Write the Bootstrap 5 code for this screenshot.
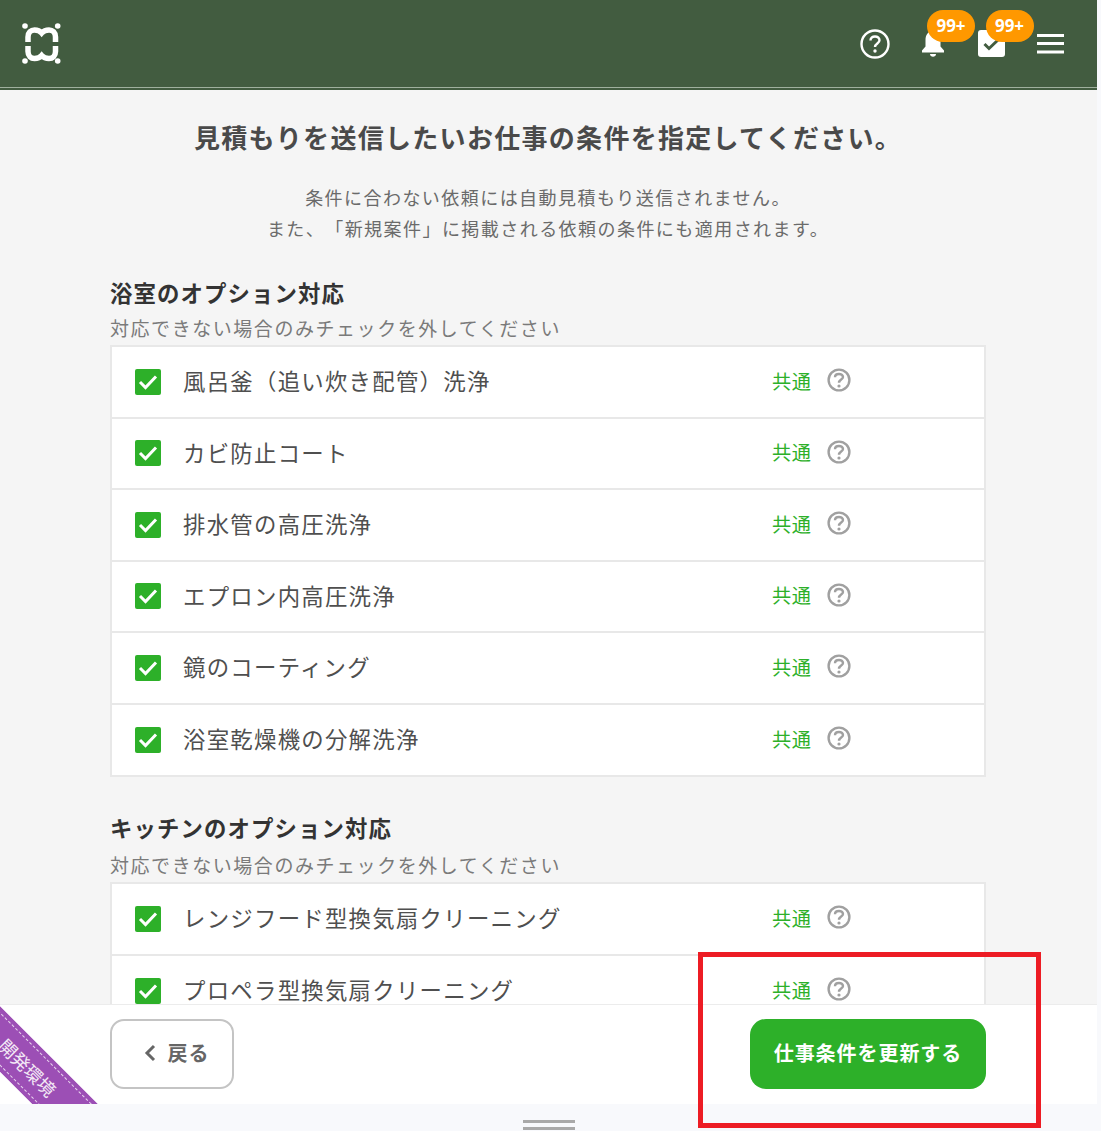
<!DOCTYPE html>
<html lang="ja"><head><meta charset="utf-8">
<link href="https://cdn.jsdelivr.net/npm/bootstrap@5.3.0/dist/css/bootstrap.min.css" rel="stylesheet">
<style>
html,body{height:1131px;overflow:hidden}
body{background:#f8f9fc;font-family:"Noto Sans CJK JP","Noto Sans",sans-serif;color:#4a4a4a;text-spacing-trim:space-all}
.shell{height:1131px;width:1097px;position:relative;background:#f5f5f5}
.topbar{height:90px;flex:none;background:#425c40;border-bottom:2px solid #425c40;position:relative}
.topbar::after{content:"";position:absolute;left:0;right:0;bottom:0;height:1px;background:#9fb09e}
.logo-wrap{padding:22px 0 0 21px}
.tools{padding:0 33px 0 0;height:88px}
.tool{position:relative;display:block;width:58.5px;height:30px;text-align:center}
.pill{position:absolute;top:-19px;left:23px;width:48px;height:32px;border-radius:16px;background:#ff9800;color:#fff;font:700 17px/31px "Open Sans",sans-serif}
.tool-menu{margin-left:16px}
.scroll-area{overflow:hidden;min-height:0}
.inner{width:876px;margin-left:110px}
.ttl{font-size:26px;line-height:36px;font-weight:700;letter-spacing:1.3px;margin:29px 0 0;color:#4a4a4a;text-align:center}
.lede{font-size:18px;line-height:31px;letter-spacing:1.45px;color:#6a6a6a;margin:27px 0 0;text-align:center}
.sec{font-size:22.4px;font-weight:700;line-height:30px;letter-spacing:1.12px;color:#333;margin:0}
.sec-a{margin-top:33px}.sec-b{margin-top:35px}
.hint{font-size:19px;line-height:26px;letter-spacing:1.55px;color:#7a7a7a;margin:8px 0 4px}
.sec-b + .hint{margin-top:10px}
.opt-list{background:#fff;border:2px solid #e8e8e8;border-radius:0}
.opt-row{height:71.5px;border-bottom:2px solid #e8e8e8;padding:0 0 0 23px}
.opt-row:last-child{border-bottom:0;height:70.5px}
.chk{width:26px;height:26px;flex:none;border-radius:2px;background:#2db029;display:flex;align-items:center;justify-content:center}
.opt-name{font-size:22.4px;letter-spacing:1.27px;color:#4f4f4f;margin-left:22px;width:589px;line-height:30px;padding-bottom:3px;box-sizing:content-box}
.shared{font-size:19.2px;letter-spacing:.5px;color:#2db029;width:55px;line-height:26px;padding-bottom:2px;box-sizing:content-box}
.qmark{margin-top:-3px}
.footbar{height:100px;flex:none;background:#fff;border-top:1px solid #ececec;padding:14px 111px 16px 110px;position:relative;overflow:hidden}
.back{width:124px;height:70px;border:2px solid #c4c4c4;border-radius:14px;background:#fff;color:#666;font-size:20px;font-weight:700;letter-spacing:1px;gap:12px;padding:0 0 2px 8px}
.back:hover{background:#fff;color:#666;border-color:#c4c4c4}
.go{width:236px;height:70px;border:0;border-radius:16px;background:#2db029;color:#fff;font-size:20px;font-weight:700;letter-spacing:.95px;padding:0 0 2px}
.go:hover{background:#2db029;color:#fff}
.strip{height:27px;flex:none;background:#f8f9fc;position:relative}
.grip{width:52px;height:10px;margin:16px auto 0;border-top:3px solid #a9a9a9;border-bottom:3px solid #a9a9a9;position:relative;left:0}
.ribbon{position:absolute;left:-72px;top:38.500px;width:200px;height:46px;background:#9c4fb5;transform:rotate(45deg);color:#f3e9f6;font-size:18px;line-height:36px;text-align:center;border:5px solid #9c4fb5;outline:1px dashed #e9d6ef;outline-offset:-5px}
.redbox{position:absolute;left:698px;top:952px;width:343px;height:176px;border:5px solid #ed1c24;pointer-events:none}
</style></head>
<body>
<div class="shell d-flex flex-column">
<header class="topbar d-flex justify-content-between">
<div class="logo-wrap"><svg width="42" height="42" viewBox="0 0 42 42" fill="none"><g fill="#fff"><circle cx="4" cy="4" r="2.8"/><circle cx="36.700" cy="4" r="2.8"/><circle cx="4" cy="39" r="2.8"/><circle cx="36.700" cy="39" r="2.8"/></g><path d="M7 20V15C7 10.500 10 8 13.500 8C16.500 8 19 9 20.700 11C22.500 9 25 8 28 8C31.500 8 34.500 10.500 34.500 15V20M7 24V29.500C7 34 10 36.500 13.500 36.500C16.500 36.500 19 35.500 20.700 33.500C22.500 35.500 25 36.500 28 36.500C31.500 36.500 34.500 34 34.500 29.500V24" stroke="#fff" stroke-width="5.500"/></svg></div>
<nav class="tools d-flex align-items-center">
<span class="tool"><svg width="30" height="30" viewBox="0 0 30 30" fill="none" stroke="#fff"><circle cx="15" cy="15" r="13.500" stroke-width="2.400"/><path d="M10.500 11.500C10.500 8.800 12.500 7.500 15 7.500C17.500 7.500 19.500 9 19.500 11.300C19.500 14.500 15 14.500 15 18" stroke-width="2.400"/><circle cx="15" cy="22" r="1.700" fill="#fff" stroke="none"/></svg></span>
<span class="tool"><svg width="24" height="30" viewBox="0 0 24 30"><path d="M12 2C7 2 4.500 6 4.500 11V17.500L1 21.500V23.500H23V21.500L19.500 17.500V11C19.500 6 17 2 12 2Z" fill="#fff"/><path d="M9 25H15C15 28.500 9 28.500 9 25Z" fill="#fff"/></svg><span class="pill">99+</span></span>
<span class="tool"><svg width="27" height="27" viewBox="0 0 27 27"><rect width="27" height="27" rx="3" fill="#fff"/><path d="M6.500 14L11 18.500L20.500 9.500" fill="none" stroke="#425c40" stroke-width="3"/></svg><span class="pill">99+</span></span>
<svg width="27" height="20" viewBox="0 0 27 20" fill="#fff" class="tool-menu"><rect width="27" height="3"/><rect y="8" width="27" height="3"/><rect y="16.500" width="27" height="3"/></svg>
</nav>
</header>
<main class="scroll-area flex-grow-1">
<div class="inner">
<h1 class="ttl">見積もりを送信したいお仕事の条件を指定してください。</h1>
<p class="lede">条件に合わない依頼には自動見積もり送信されません。<br>また、「新規案件」に掲載される依頼の条件にも適用されます。</p>
<h2 class="sec sec-a">浴室のオプション対応</h2>
<p class="hint">対応できない場合のみチェックを外してください</p>
<ul class="opt-list list-unstyled mb-0">
<li class="opt-row d-flex align-items-center"><span class="chk"><svg width="20" height="16" viewBox="0 0 20 16" fill="none" stroke="#fff" stroke-width="3"><path d="M2 8L7.500 13.500L18 2.500"/></svg></span><span class="opt-name">風呂釜（追い炊き配管）洗浄</span><span class="shared">共通</span><svg class="qmark" width="24" height="24" viewBox="0 0 30 30" fill="none" stroke="#a0a0a0"><circle cx="15" cy="15" r="13" stroke-width="3"/><path d="M10 11.500C10 8.800 12.300 7.500 15 7.500C17.700 7.500 20 9 20 11.300C20 14.500 15 14.500 15 18.500" stroke-width="3"/><circle cx="15" cy="22.500" r="2" fill="#a0a0a0" stroke="none"/></svg></li>
<li class="opt-row d-flex align-items-center"><span class="chk"><svg width="20" height="16" viewBox="0 0 20 16" fill="none" stroke="#fff" stroke-width="3"><path d="M2 8L7.500 13.500L18 2.500"/></svg></span><span class="opt-name">カビ防止コート</span><span class="shared">共通</span><svg class="qmark" width="24" height="24" viewBox="0 0 30 30" fill="none" stroke="#a0a0a0"><circle cx="15" cy="15" r="13" stroke-width="3"/><path d="M10 11.500C10 8.800 12.300 7.500 15 7.500C17.700 7.500 20 9 20 11.300C20 14.500 15 14.500 15 18.500" stroke-width="3"/><circle cx="15" cy="22.500" r="2" fill="#a0a0a0" stroke="none"/></svg></li>
<li class="opt-row d-flex align-items-center"><span class="chk"><svg width="20" height="16" viewBox="0 0 20 16" fill="none" stroke="#fff" stroke-width="3"><path d="M2 8L7.500 13.500L18 2.500"/></svg></span><span class="opt-name">排水管の高圧洗浄</span><span class="shared">共通</span><svg class="qmark" width="24" height="24" viewBox="0 0 30 30" fill="none" stroke="#a0a0a0"><circle cx="15" cy="15" r="13" stroke-width="3"/><path d="M10 11.500C10 8.800 12.300 7.500 15 7.500C17.700 7.500 20 9 20 11.300C20 14.500 15 14.500 15 18.500" stroke-width="3"/><circle cx="15" cy="22.500" r="2" fill="#a0a0a0" stroke="none"/></svg></li>
<li class="opt-row d-flex align-items-center"><span class="chk"><svg width="20" height="16" viewBox="0 0 20 16" fill="none" stroke="#fff" stroke-width="3"><path d="M2 8L7.500 13.500L18 2.500"/></svg></span><span class="opt-name">エプロン内高圧洗浄</span><span class="shared">共通</span><svg class="qmark" width="24" height="24" viewBox="0 0 30 30" fill="none" stroke="#a0a0a0"><circle cx="15" cy="15" r="13" stroke-width="3"/><path d="M10 11.500C10 8.800 12.300 7.500 15 7.500C17.700 7.500 20 9 20 11.300C20 14.500 15 14.500 15 18.500" stroke-width="3"/><circle cx="15" cy="22.500" r="2" fill="#a0a0a0" stroke="none"/></svg></li>
<li class="opt-row d-flex align-items-center"><span class="chk"><svg width="20" height="16" viewBox="0 0 20 16" fill="none" stroke="#fff" stroke-width="3"><path d="M2 8L7.500 13.500L18 2.500"/></svg></span><span class="opt-name">鏡のコーティング</span><span class="shared">共通</span><svg class="qmark" width="24" height="24" viewBox="0 0 30 30" fill="none" stroke="#a0a0a0"><circle cx="15" cy="15" r="13" stroke-width="3"/><path d="M10 11.500C10 8.800 12.300 7.500 15 7.500C17.700 7.500 20 9 20 11.300C20 14.500 15 14.500 15 18.500" stroke-width="3"/><circle cx="15" cy="22.500" r="2" fill="#a0a0a0" stroke="none"/></svg></li>
<li class="opt-row d-flex align-items-center"><span class="chk"><svg width="20" height="16" viewBox="0 0 20 16" fill="none" stroke="#fff" stroke-width="3"><path d="M2 8L7.500 13.500L18 2.500"/></svg></span><span class="opt-name">浴室乾燥機の分解洗浄</span><span class="shared">共通</span><svg class="qmark" width="24" height="24" viewBox="0 0 30 30" fill="none" stroke="#a0a0a0"><circle cx="15" cy="15" r="13" stroke-width="3"/><path d="M10 11.500C10 8.800 12.300 7.500 15 7.500C17.700 7.500 20 9 20 11.300C20 14.500 15 14.500 15 18.500" stroke-width="3"/><circle cx="15" cy="22.500" r="2" fill="#a0a0a0" stroke="none"/></svg></li>
</ul>
<h2 class="sec sec-b">キッチンのオプション対応</h2>
<p class="hint">対応できない場合のみチェックを外してください</p>
<ul class="opt-list list-unstyled mb-0">
<li class="opt-row d-flex align-items-center"><span class="chk"><svg width="20" height="16" viewBox="0 0 20 16" fill="none" stroke="#fff" stroke-width="3"><path d="M2 8L7.500 13.500L18 2.500"/></svg></span><span class="opt-name">レンジフード型換気扇クリーニング</span><span class="shared">共通</span><svg class="qmark" width="24" height="24" viewBox="0 0 30 30" fill="none" stroke="#a0a0a0"><circle cx="15" cy="15" r="13" stroke-width="3"/><path d="M10 11.500C10 8.800 12.300 7.500 15 7.500C17.700 7.500 20 9 20 11.300C20 14.500 15 14.500 15 18.500" stroke-width="3"/><circle cx="15" cy="22.500" r="2" fill="#a0a0a0" stroke="none"/></svg></li>
<li class="opt-row d-flex align-items-center"><span class="chk"><svg width="20" height="16" viewBox="0 0 20 16" fill="none" stroke="#fff" stroke-width="3"><path d="M2 8L7.500 13.500L18 2.500"/></svg></span><span class="opt-name">プロペラ型換気扇クリーニング</span><span class="shared">共通</span><svg class="qmark" width="24" height="24" viewBox="0 0 30 30" fill="none" stroke="#a0a0a0"><circle cx="15" cy="15" r="13" stroke-width="3"/><path d="M10 11.500C10 8.800 12.300 7.500 15 7.500C17.700 7.500 20 9 20 11.300C20 14.500 15 14.500 15 18.500" stroke-width="3"/><circle cx="15" cy="22.500" r="2" fill="#a0a0a0" stroke="none"/></svg></li>
</ul>
</div>
</main>
<footer class="footbar d-flex justify-content-between align-items-center">
<div class="ribbon">開発環境</div>
<button class="btn back d-flex align-items-center justify-content-center" type="button"><svg width="13" height="18" viewBox="0 0 13 18" fill="none" stroke="#666" stroke-width="3"><path d="M11 2L4 9L11 16"/></svg>戻る</button>
<button class="btn go" type="button">仕事条件を更新する</button>
</footer>
<div class="strip"><div class="grip"></div></div>
<div class="redbox"></div>
</div>
</body></html>
